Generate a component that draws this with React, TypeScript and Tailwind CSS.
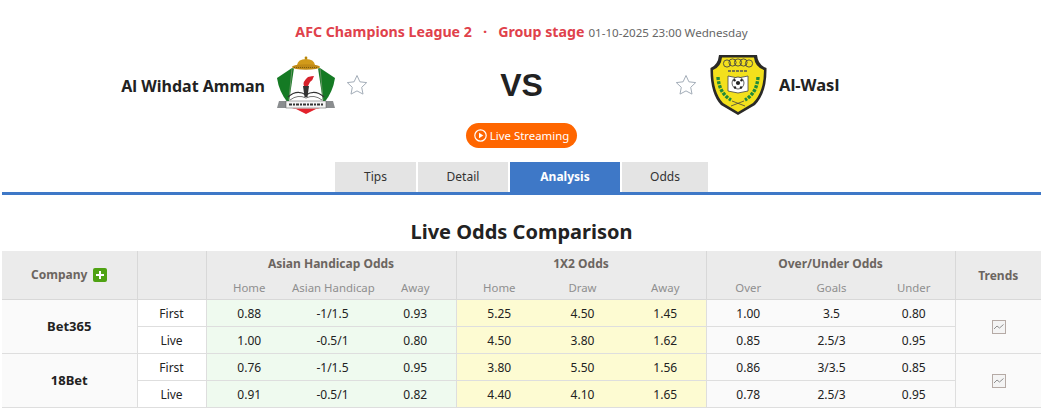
import React from "react";

function Star() {
  return (
    <svg width="22" height="22" viewBox="0 0 22 22" className="shrink-0">
      <path d="M11 1.5l2.9 6.3 6.8.8-5 4.7 1.3 6.8L11 16.9l-6 3.2 1.3-6.8-5-4.7 6.8-.8z" fill="#fff" stroke="#a3adb8" strokeWidth="1" />
    </svg>
  );
}

function WihdatLogo() {
  return (
    <svg width="58" height="58" viewBox="0 0 58 58" className="shrink-0">
      <path d="M15 12 L0 22 Q2 36 11 47 L16 42 L19 13z" fill="#157a24" />
      <path d="M43 12 L58 22 Q56 36 47 47 L42 42 L39 13z" fill="#157a24" />
      <path d="M17 12 H41 L46 46 H12z" fill="#fff" />
      <path d="M15 12 L12 44" stroke="#9aa58f" strokeWidth="0.6" />
      <path d="M43 12 L46 44" stroke="#9aa58f" strokeWidth="0.6" />
      <path d="M17 52 H41 L29 58z" fill="#e3222c" />
      <path d="M15 52 H43 L41 53 H17z" fill="#f4a0a0" />
      <path d="M20 9 Q21 3 29 3 Q37 3 38 9z" fill="#d19a1a" />
      <circle cx="29" cy="2" r="1.4" fill="#b8860b" />
      <ellipse cx="29" cy="11" rx="14" ry="2.8" fill="#c08a16" />
      <path d="M17 11.5 H41" stroke="#7a5a10" strokeWidth="1" strokeDasharray="1 1" />
      <path d="M31 21 Q35 20 37 20 Q36 24 33 26 L31 30 L27 30 Q25 26 31 21z" fill="#d6212b" />
      <path d="M26 30 H32 L30.5 41 H27.5z" fill="#333" />
      <path d="M11 41 Q20 33 29 39 Q38 33 47 41" fill="none" stroke="#333" strokeWidth="1.2" />
      <path d="M13 44 Q21 38 29 42 Q37 38 45 44" fill="none" stroke="#777" strokeWidth="1" />
      <path d="M2 45 H56 L58 52 H0z" fill="#8a8d8f" />
      <rect x="9" y="45" width="40" height="7" fill="#f4f4f4" stroke="#555" strokeWidth="0.5" />
      <path d="M12 48.5 H46" stroke="#333" strokeWidth="2" strokeDasharray="3 1 2 1" />
    </svg>
  );
}

function WaslLogo() {
  return (
    <svg width="57" height="60" viewBox="0 0 57 60" className="shrink-0">
      <path d="M9 0 H47 Q48 10 56.5 13 Q57 38 45 50 L28 60 L11 50 Q0 38 0.5 13 Q8 10 9 0z" fill="#2a2a28" />
      <path d="M12 2.5 H44 Q45 12 54 15 Q54 37 43 48 L28 57 L13 48 Q3 37 3 15 Q11 12 12 2.5z" fill="#f3e01c" />
      <g fill="none" stroke="#444" strokeWidth="0.9">
        <circle cx="17" cy="8.5" r="3.6" /><circle cx="22.5" cy="7.5" r="3.6" /><circle cx="28" cy="7.5" r="3.6" /><circle cx="33.5" cy="7.5" r="3.6" /><circle cx="39" cy="8.5" r="3.6" />
      </g>
      <path d="M18 16 H38" stroke="#555" strokeWidth="1.4" strokeDasharray="3 1" />
      <path d="M18 21 L28 23 L38 21 V36 L28 38 L18 36z" fill="#fff" stroke="#444" strokeWidth="0.8" />
      <circle cx="28" cy="28" r="6" fill="#fff" stroke="#222" strokeWidth="0.7" />
      <circle cx="28" cy="28" r="2.1" fill="#222" />
      <circle cx="24.5" cy="25.3" r="1.2" fill="#222" /><circle cx="31.5" cy="25.3" r="1.2" fill="#222" /><circle cx="25" cy="32.5" r="1.2" fill="#222" /><circle cx="31" cy="32.5" r="1.2" fill="#222" />
      <g fill="none" stroke="#1f8a3a" strokeWidth="3.4" strokeDasharray="3 1.2">
        <path d="M8 22 Q9 38 21 45" />
        <path d="M48 22 Q47 38 35 45" />
      </g>
      <path d="M21 51 L34 46 M35 51 L22 46" stroke="#444" strokeWidth="0.8" />
    </svg>
  );
}

function TrendIcon() {
  return (
    <svg width="14" height="14" viewBox="0 0 14 14">
      <rect x="0.5" y="0.5" width="13" height="13" fill="#f4f4f4" stroke="#b5aaa5" />
      <path d="M2 9 L5 6 L7.5 8 L11.5 4.5" fill="none" stroke="#8f8f8f" strokeWidth="1" />
    </svg>
  );
}

const tabs = [
  { label: "Tips", w: "w-[81px]" },
  { label: "Detail", w: "w-[90px]" },
  { label: "Analysis", w: "w-[110px]", active: true },
  { label: "Odds", w: "w-[86px]" },
];

type Row = { kind: string; a: string[]; b: string[]; c: string[] };
const groups: { name: string; rows: Row[] }[] = [
  {
    name: "Bet365",
    rows: [
      { kind: "First", a: ["0.88", "-1/1.5", "0.93"], b: ["5.25", "4.50", "1.45"], c: ["1.00", "3.5", "0.80"] },
      { kind: "Live", a: ["1.00", "-0.5/1", "0.80"], b: ["4.50", "3.80", "1.62"], c: ["0.85", "2.5/3", "0.95"] },
    ],
  },
  {
    name: "18Bet",
    rows: [
      { kind: "First", a: ["0.76", "-1/1.5", "0.95"], b: ["3.80", "5.50", "1.56"], c: ["0.86", "3/3.5", "0.85"] },
      { kind: "Live", a: ["0.91", "-0.5/1", "0.82"], b: ["4.40", "4.10", "1.65"], c: ["0.78", "2.5/3", "0.95"] },
    ],
  },
];

const th = "border-r border-b border-[#d8d8d8] bg-[#ebebeb] text-[#6b6560] font-bold text-[12px] leading-[16px] p-0 whitespace-nowrap";
const sub = "border-b border-[#d8d8d8] bg-[#ebebeb] text-[#8f8f8f] font-normal text-[11.4px] leading-[16px] p-0 pt-[2px] whitespace-nowrap";
const td = "border-b border-[#dedede] p-0 text-center text-[12px] leading-[16px] text-[#222]";

export default function App() {
  return (
    <div className="w-[1043px] h-[413px] overflow-hidden bg-white font-['Noto_Sans',sans-serif]">
      <div className="flex justify-center items-baseline pt-[21px] h-[43px]">
        <span className="text-[14.2px] leading-[20px] font-bold text-[#e0414b]">AFC Champions League 2</span>
        <span className="text-[15px] leading-[20px] font-bold text-[#e0414b] mx-[11px]">·</span>
        <span className="text-[14.2px] leading-[20px] font-bold text-[#e0414b]">Group stage</span>
        <span className="text-[11.6px] leading-[20px] text-[#666] ml-[4px]">01-10-2025 23:00 Wednesday</span>
      </div>
      <div className="flex items-center h-[62px] mt-[11px]">
        <div className="flex w-[368px] items-center justify-end gap-[11px]">
          <span className="text-[16px] font-bold text-[#222] mt-[1px] mr-[1px]">Al Wihdat Amman</span>
          <WihdatLogo />
          <Star />
        </div>
        <div className="flex-1 text-center text-[32px] font-bold text-[#222] font-['Liberation_Sans',sans-serif]">VS</div>
        <div className="flex w-[368px] items-center gap-[11px]">
          <Star />
          <span className="flex ml-[2px]"><WaslLogo /></span>
          <span className="text-[16.5px] font-bold text-[#222] mt-[1px] ml-[1px]">Al-Wasl</span>
        </div>
      </div>
      <div className="flex justify-center mt-[7px]">
        <div className="flex items-center justify-center w-[111px] h-[25px] rounded-full bg-[#ff6600] text-white text-[11.4px] gap-[3px]">
          <svg width="13" height="13" viewBox="0 0 13 13">
            <circle cx="6.5" cy="6.5" r="5.7" fill="none" stroke="#fff" strokeWidth="1.2" />
            <path d="M5 3.7 L9.3 6.5 L5 9.3z" fill="#fff" />
          </svg>
          Live Streaming
        </div>
      </div>
      <div className="mt-[14px] mx-[2px] h-[33px] border-b-[3px] border-[#3e78c7] flex pl-[333px] gap-[2px]">
        {tabs.map((t) => (
          <div
            key={t.label}
            className={`${t.w} h-[30px] flex items-center justify-center text-[12px] ${
              t.active ? "bg-[#3e78c7] text-white font-bold" : "bg-[#e4e4e4] text-[#333]"
            }`}
          >
            {t.label}
          </div>
        ))}
      </div>
      <h2 className="text-center text-[20px] leading-[28px] font-bold text-[#222] mt-[23px]">Live Odds Comparison</h2>
      <table className="mt-[5px] ml-[2px] w-[1039px] table-fixed border-collapse">
        <colgroup>
          <col className="w-[135px]" />
          <col className="w-[69px]" />
          <col className="w-[84px]" /><col className="w-[83px]" /><col className="w-[83px]" />
          <col className="w-[84px]" /><col className="w-[83px]" /><col className="w-[83px]" />
          <col className="w-[84px]" /><col className="w-[83px]" /><col className="w-[82px]" />
          <col />
        </colgroup>
        <thead>
          <tr className="h-[24px]">
            <th rowSpan={2} className={th}>
              <span className="inline-flex items-center gap-[6px]">
                Company
                <span className="inline-flex w-[14px] h-[14px] items-center justify-center rounded-[2px] bg-[#4fa213]">
                  <svg width="8" height="8" viewBox="0 0 8 8"><path d="M3 0h2v3h3v2H5v3H3V5H0V3h3z" fill="#fff" /></svg>
                </span>
              </span>
            </th>
            <th rowSpan={2} className={th}></th>
            <th colSpan={3} className={`${th} border-b-0 pt-[2px]`}>Asian Handicap Odds</th>
            <th colSpan={3} className={`${th} border-b-0 pt-[2px]`}>1X2 Odds</th>
            <th colSpan={3} className={`${th} border-b-0 pt-[2px]`}>Over/Under Odds</th>
            <th rowSpan={2} className={`${th} border-r-0 pt-[2px]`}>Trends</th>
          </tr>
          <tr className="h-[24px]">
            {["Home", "Asian Handicap", "Away", "Home", "Draw", "Away", "Over", "Goals", "Under"].map((s, i) => (
              <th key={i} className={`${sub} ${i < 6 ? "pl-[2px]" : ""} ${i % 3 === 2 ? "border-r" : ""}`}>{s}</th>
            ))}
          </tr>
        </thead>
        <tbody>
          {groups.map((g) =>
            g.rows.map((r, ri) => (
              <tr key={g.name + ri} className="h-[27px]">
                {ri === 0 && (
                  <td rowSpan={2} className={`${td} border-r bg-[#fafafa] font-bold text-[13px] text-[#7a716b]`}>{g.name}</td>
                )}
                <td className={`${td} border-r bg-white pt-[2px]`}>{r.kind}</td>
                {r.a.map((v, i) => (
                  <td key={i} className={`${td} bg-[#effaef] pt-[2px] pl-[2px] ${i === 2 ? "border-r" : ""}`}>{v}</td>
                ))}
                {r.b.map((v, i) => (
                  <td key={i} className={`${td} bg-[#fdfbd2] pt-[2px] pl-[2px] ${i === 2 ? "border-r" : ""}`}>{v}</td>
                ))}
                {r.c.map((v, i) => (
                  <td key={i} className={`${td} bg-[#fafafa] pt-[2px] ${i === 2 ? "border-r" : ""}`}>{v}</td>
                ))}
                {ri === 0 && (
                  <td rowSpan={2} className={`${td} bg-[#fafafa] pl-[1px]`}>
                    <span className="inline-flex align-middle"><TrendIcon /></span>
                  </td>
                )}
              </tr>
            ))
          )}
        </tbody>
      </table>
    </div>
  );
}
